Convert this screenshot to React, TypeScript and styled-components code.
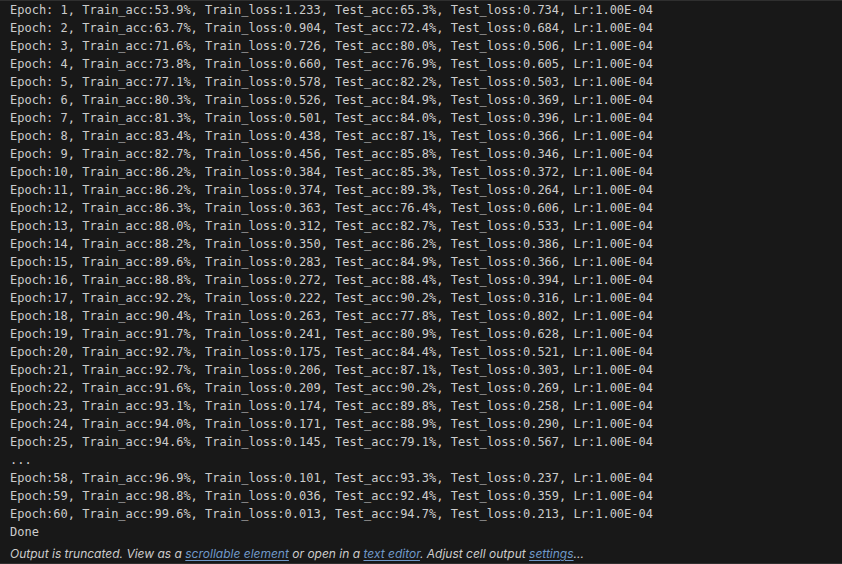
import React from "react";
import styled, { createGlobalStyle } from "styled-components";

const Global = createGlobalStyle`
  html, body { margin: 0; padding: 0; background: #181818; }
  body { width: 842px; height: 564px; overflow: hidden; }
`;

const Panel = styled.div`
  box-sizing: border-box;
  width: 842px;
  height: 564px;
  background: #181818;
  border-top: 1px solid #2f2f2f;
  border-bottom: 1px solid #2f2f2f;
  padding: 0 0 0 10px;
  display: flex;
  flex-direction: column;
`;

const Log = styled.pre`
  margin: 0;
  font-family: "DejaVu Sans Mono", "Liberation Mono", monospace;
  font-size: 12px;
  line-height: 18px;
  color: #cccccc;
  white-space: pre;
`;

const Footer = styled.div`
  margin-top: 4px;
  font-family: Inter, "Liberation Sans", Arial, sans-serif;
  font-style: italic;
  font-size: 12px;
  line-height: 18px;
  color: #cccccc;
`;

const Link = styled.a`
  color: #7098c8;
  text-decoration: underline;
  text-underline-offset: 2px;
  cursor: pointer;
`;

type Row = [number, string, string, string, string];

const rows: Row[] = [
  [1, "53.9", "1.233", "65.3", "0.734"],
  [2, "63.7", "0.904", "72.4", "0.684"],
  [3, "71.6", "0.726", "80.0", "0.506"],
  [4, "73.8", "0.660", "76.9", "0.605"],
  [5, "77.1", "0.578", "82.2", "0.503"],
  [6, "80.3", "0.526", "84.9", "0.369"],
  [7, "81.3", "0.501", "84.0", "0.396"],
  [8, "83.4", "0.438", "87.1", "0.366"],
  [9, "82.7", "0.456", "85.8", "0.346"],
  [10, "86.2", "0.384", "85.3", "0.372"],
  [11, "86.2", "0.374", "89.3", "0.264"],
  [12, "86.3", "0.363", "76.4", "0.606"],
  [13, "88.0", "0.312", "82.7", "0.533"],
  [14, "88.2", "0.350", "86.2", "0.386"],
  [15, "89.6", "0.283", "84.9", "0.366"],
  [16, "88.8", "0.272", "88.4", "0.394"],
  [17, "92.2", "0.222", "90.2", "0.316"],
  [18, "90.4", "0.263", "77.8", "0.802"],
  [19, "91.7", "0.241", "80.9", "0.628"],
  [20, "92.7", "0.175", "84.4", "0.521"],
  [21, "92.7", "0.206", "87.1", "0.303"],
  [22, "91.6", "0.209", "90.2", "0.269"],
  [23, "93.1", "0.174", "89.8", "0.258"],
  [24, "94.0", "0.171", "88.9", "0.290"],
  [25, "94.6", "0.145", "79.1", "0.567"],
];

const tail: Row[] = [
  [58, "96.9", "0.101", "93.3", "0.237"],
  [59, "98.8", "0.036", "92.4", "0.359"],
  [60, "99.6", "0.013", "94.7", "0.213"],
];

const fmt = ([e, ta, tl, va, vl]: Row) =>
  `Epoch:${String(e).padStart(2, " ")}, Train_acc:${ta}%, Train_loss:${tl}, Test_acc:${va}%, Test_loss:${vl}, Lr:1.00E-04`;

export default function App() {
  const text = [...rows.map(fmt), "...", ...tail.map(fmt), "Done"].join("\n");
  return (
    <>
      <Global />
      <Panel>
        <Log>{text}</Log>
        <Footer>
          Output is truncated. View as a <Link>scrollable element</Link> or open in a{" "}
          <Link>text editor</Link>. Adjust cell output <Link>settings</Link>...
        </Footer>
      </Panel>
    </>
  );
}
